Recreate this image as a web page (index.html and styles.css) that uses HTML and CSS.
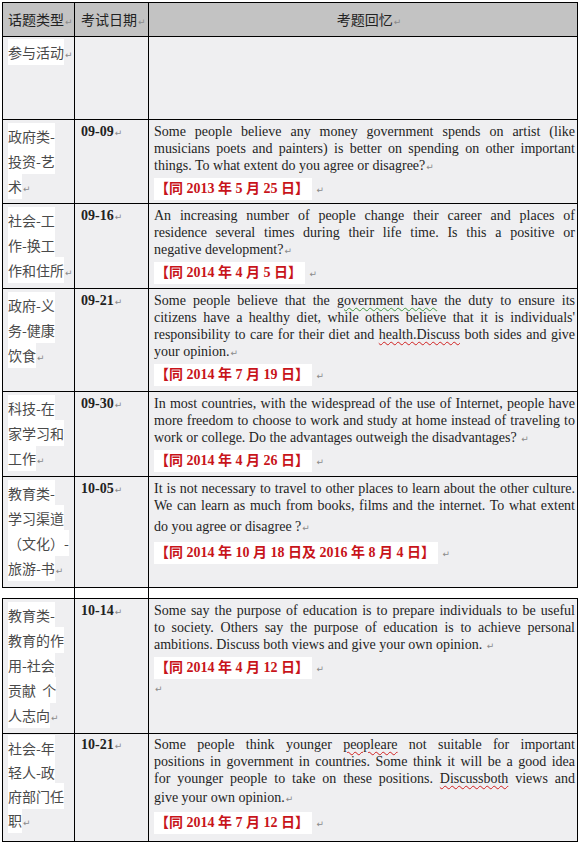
FILE: index.html
```html
<!DOCTYPE html>
<html lang="zh-CN">
<head>
<meta charset="utf-8">
<title>考题回忆</title>
<link rel="stylesheet" href="styles.css">
</head>
<body>
<div class="page">
  <div class="tbl t1">
    <div class="cell hd c1">话题类型<span class="ret">↵</span></div>
    <div class="cell hd c2">考试日期<span class="ret">↵</span></div>
    <div class="cell hd c3 ctr">考题回忆<span class="ret">↵</span></div>

    <div class="cell cn r1"><span class="hl">参与活动</span><span class="ret">↵</span></div>
    <div class="cell dt"></div>
    <div class="cell en"></div>

    <div class="cell cn"><span class="hl">政府类-</span><br><span class="hl">投资-艺</span><br><span class="hl">术</span><span class="ret">↵</span></div>
    <div class="cell dt">09-09<span class="ret">↵</span></div>
    <div class="cell en">
      <div class="ln">Some people believe any money government spends on artist (like</div>
      <div class="ln">musicians poets and painters) is better on spending on other important</div>
      <div class="ln last">things. To what extent do you agree or disagree?<span class="ret">↵</span></div>
      <div class="redln"><span class="red">【同 2013 年 5 月 25 日】</span> <span class="ret">↵</span></div>
    </div>

    <div class="cell cn"><span class="hl">社会-工</span><br><span class="hl">作-换工</span><br><span class="hl">作和住所</span><span class="ret">↵</span></div>
    <div class="cell dt">09-16<span class="ret">↵</span></div>
    <div class="cell en">
      <div class="ln">An increasing number of people change their career and places of</div>
      <div class="ln">residence several times during their life time. Is this a positive or</div>
      <div class="ln last">negative development?<span class="ret">↵</span></div>
      <div class="redln"><span class="red">【同 2014 年 4 月 5 日】</span> <span class="ret">↵</span></div>
    </div>

    <div class="cell cn"><span class="hl">政府-义</span><br><span class="hl">务-健康</span><br><span class="hl">饮食</span><span class="ret">↵</span></div>
    <div class="cell dt">09-21<span class="ret">↵</span></div>
    <div class="cell en">
      <div class="ln">Some people believe that the <span class="wg">government have</span> the duty to ensure its</div>
      <div class="ln">citizens have a healthy diet, while others believe that it is individuals'</div>
      <div class="ln">responsibility to care for their diet and <span class="wr">health.Discuss</span> both sides and give</div>
      <div class="ln last">your opinion.<span class="ret">↵</span></div>
      <div class="redln"><span class="red">【同 2014 年 7 月 19 日】</span> <span class="ret">↵</span></div>
    </div>

    <div class="cell cn"><span class="hl">科技-在</span><br><span class="hl">家学习和</span><br><span class="hl">工作</span><span class="ret">↵</span></div>
    <div class="cell dt">09-30<span class="ret">↵</span></div>
    <div class="cell en">
      <div class="ln">In most countries, with the widespread of the use of Internet, people have</div>
      <div class="ln">more freedom to choose to work and study at home instead of traveling to</div>
      <div class="ln last">work or college. Do the advantages outweigh the disadvantages? <span class="ret">↵</span></div>
      <div class="redln"><span class="red">【同 2014 年 4 月 26 日】</span> <span class="ret">↵</span></div>
    </div>

    <div class="cell cn"><span class="hl">教育类-</span><br><span class="hl">学习渠道</span><br><span class="hl">（文化）-</span><br><span class="hl">旅游-书</span><span class="ret">↵</span></div>
    <div class="cell dt">10-05<span class="ret">↵</span></div>
    <div class="cell en">
      <div class="ln">It is not necessary to travel to other places to learn about the other culture.</div>
      <div class="ln">We can learn as much from books, films and the internet. To what extent</div>
      <div class="ln last gapx">do you agree or disagree ?<span class="ret">↵</span></div>
      <div class="redln more"><span class="red">【同 2014 年 10 月 18 日及 2016 年 8 月 4 日】</span> <span class="ret">↵</span></div>
    </div>
  </div>

  <div class="gap"><div class="g"></div><div class="g"></div><div></div></div>

  <div class="tbl t2">
    <div class="cell cn"><span class="hl">教育类-</span><br><span class="hl">教育的作</span><br><span class="hl">用-社会</span><br><span class="hl">贡献&nbsp;&nbsp;个</span><br><span class="hl">人志向</span><span class="ret">↵</span></div>
    <div class="cell dt">10-14<span class="ret">↵</span></div>
    <div class="cell en">
      <div class="ln">Some say the purpose of education is to prepare individuals to be useful</div>
      <div class="ln">to society. Others say the purpose of education is to achieve personal</div>
      <div class="ln last">ambitions. Discuss both views and give your own opinion. <span class="ret">↵</span></div>
      <div class="redln"><span class="red">【同 2014 年 4 月 12 日】</span> <span class="ret">↵</span></div>
      <div class="ln last"><span class="ret">↵</span></div>
    </div>

    <div class="cell cn r8"><span class="hl">社会-年</span><br><span class="hl">轻人-政</span><br><span class="hl">府部门任</span><br><span class="hl">职</span><span class="ret">↵</span></div>
    <div class="cell dt r8d">10-21<span class="ret">↵</span></div>
    <div class="cell en r8e">
      <div class="ln">Some people think younger <span class="wr">peopleare</span> not suitable for important</div>
      <div class="ln">positions in government in countries. Some think it will be a good idea</div>
      <div class="ln">for younger people to take on these positions. <span class="wr">Discussboth</span> views and</div>
      <div class="ln last gapy">give your own opinion.<span class="ret">↵</span></div>
      <div class="redln more2"><span class="red">【同 2014 年 7 月 12 日】</span> <span class="ret">↵</span></div>
    </div>
  </div>
</div>
</body>
</html>
```

FILE: styles.css
```css
html, body {
  margin: 0;
  padding: 0;
  background: #ffffff;
}

.page {
  padding: 2px 0 0 2px;
  width: 580px;
  box-sizing: border-box;
}

.tbl {
  display: grid;
  grid-template-columns: 72px 74px 429px;
  border-top: 1px solid #000;
  border-left: 1px solid #000;
  width: 576px;
  box-sizing: border-box;
}

.t1 {
  grid-template-rows: 34px 83px 84px 85px 103px 85px 111px;
}

.t2 {
  grid-template-rows: 135px 108px;
}

.cell {
  box-sizing: border-box;
  border-right: 1px solid #000;
  border-bottom: 1px solid #000;
  background: #efeff1;
  overflow: hidden;
}

.hd {
  background: #c3c3c3;
  font-family: "Noto Sans CJK SC", "Noto Sans", sans-serif;
  font-size: 14px;
  line-height: 33px;
  color: #222;
  white-space: nowrap;
}

.hd.c1 { padding-left: 5px; }
.hd.c2 { padding-left: 6px; }
.hd.ctr { text-align: center; padding-left: 12px; }

.cn {
  font-family: "Noto Sans CJK SC", "Noto Sans", sans-serif;
  font-size: 14px;
  line-height: 25px;
  color: #4a4a4a;
  padding: 4px 0 0 5px;
  white-space: nowrap;
}

.cn.r1 { padding-top: 3px; }
.cn.r8 { padding-top: 2px; line-height: 24px; }

.hl {
  background: #ffffff;
  padding: 3px 0;
}

.dt {
  font-family: "Liberation Serif", "Times New Roman", serif;
  font-weight: bold;
  font-size: 14px;
  line-height: 17px;
  color: #222;
  padding: 3px 0 0 6px;
  white-space: nowrap;
}

.en {
  font-family: "Liberation Serif", "Times New Roman", serif;
  font-size: 14px;
  line-height: 17px;
  color: #1e1e1e;
  padding: 3px 2px 0 5px;
}

.r8d, .r8e { padding-top: 2px; }

.ln {
  text-align: justify;
  text-align-last: justify;
}

.ln.last {
  text-align: left;
  text-align-last: left;
}

.gapx { margin-top: 4px; }
.gapy { margin-top: 2px; }

.redln {
  margin-top: 2px;
  height: 22px;
  line-height: 22px;
}

.redln.more { margin-top: 5px; }
.redln.more2 { margin-top: 4px; }

.red {
  display: inline-block;
  height: 22px;
  line-height: 22px;
  background: #ffffff;
  padding: 0 3px 0 1px;
  color: #c8141a;
  font-weight: bold;
  font-family: "Liberation Serif", "Noto Sans CJK SC", serif;
  font-size: 14px;
  vertical-align: top;
}

.ret {
  font-family: "DejaVu Sans", sans-serif;
  font-size: 9px;
  color: #8a8a8a;
  font-weight: normal;
  margin-left: 1px;
}

.wg {
  text-decoration: underline wavy #3c9a3c;
  text-decoration-thickness: 1px;
  text-underline-offset: 2px;
}

.wr {
  text-decoration: underline wavy #d02020;
  text-decoration-thickness: 1px;
  text-underline-offset: 2px;
}

.gap {
  display: grid;
  grid-template-columns: 72px 74px 429px;
  margin-left: 1px;
  height: 10px;
}

.g {
  border-right: 1px solid #000;
}
```
